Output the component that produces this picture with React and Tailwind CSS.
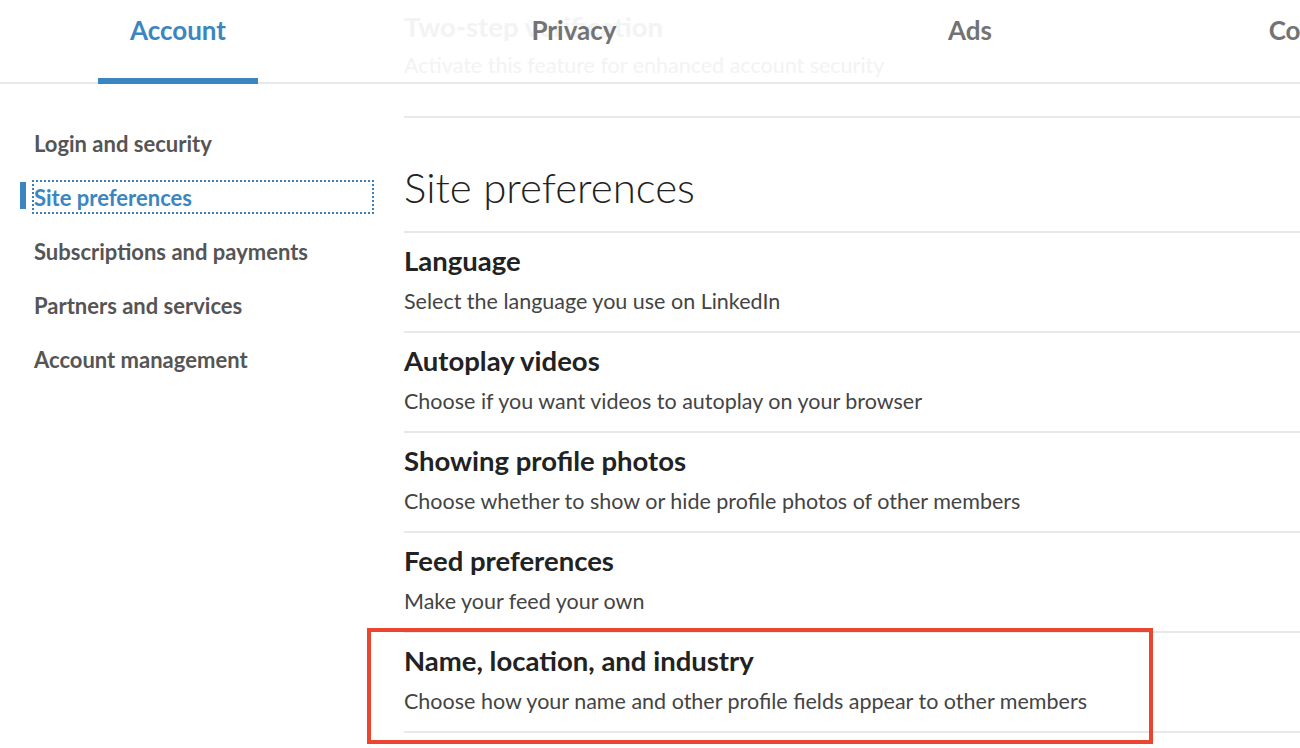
import React from 'react'

const tabs = ['Account', 'Privacy', 'Ads', 'Communications']

const navItems = [
  'Login and security',
  'Site preferences',
  'Subscriptions and payments',
  'Partners and services',
  'Account management',
]

const settings = [
  { title: 'Language', desc: 'Select the language you use on LinkedIn' },
  { title: 'Autoplay videos', desc: 'Choose if you want videos to autoplay on your browser' },
  { title: 'Showing profile photos', desc: 'Choose whether to show or hide profile photos of other members' },
  { title: 'Feed preferences', desc: 'Make your feed your own' },
  { title: 'Name, location, and industry', desc: 'Choose how your name and other profile fields appear to other members' },
]

export default function App() {
  return (
    <div className="relative w-[1300px] h-[748px] overflow-hidden bg-white font-['Lato',sans-serif]">
      {/* Tabs header, content scrolled behind it shows through */}
      <div className="relative h-[84px] border-b-2 border-[#e6e9ec]">
        <div className="absolute left-[404px] top-[8px] text-[#f2f3f4] whitespace-nowrap">
          <p className="text-[27.5px] font-bold leading-[38px]">Two-step verification</p>
          <p className="text-[21.5px] leading-[28px] mt-[5px]">Activate this feature for enhanced account security</p>
        </div>
        <div className="relative flex h-full pl-[98px] gap-[236px]">
          {tabs.map((t, i) => (
            <div
              key={t}
              className={
                'w-[160px] shrink-0 flex justify-center pt-[11px] text-[26px] font-bold leading-[38px] whitespace-nowrap ' +
                (i === 0 ? 'text-[#3b86c0] border-b-[6px] border-[#3b86c0] -mb-[2px]' : 'text-[#737373]')
              }
            >
              {t}
            </div>
          ))}
        </div>
      </div>

      <div className="flex">
        {/* Sidebar */}
        <div className="w-[404px] shrink-0 pt-[32px] pl-[20px]">
          {navItems.map((n, i) => (
            <div key={n} className="relative h-[54px] flex items-center">
              {i === 1 && <span className="absolute left-0 top-[12px] w-[6px] h-[27px] bg-[#3b86c0]" />}
              <div
                className={
                  'ml-[12px] w-[342px] h-[34px] flex items-center border-2 border-dotted text-[22px] font-bold whitespace-nowrap ' +
                  (i === 1 ? 'border-[#3b7fb9] text-[#3b86c0]' : 'border-transparent text-[#555555]')
                }
              >
                {n}
              </div>
            </div>
          ))}
        </div>

        {/* Main */}
        <div className="flex-1 mt-[32px]">
          <div className="border-t-2 border-[#e6e9ec]">
            <h1 className="pt-[45px] pb-[19px] text-[42px] font-light leading-[49px] text-[#222222] border-b-2 border-[#e6e9ec]">
              Site preferences
            </h1>
            {settings.map(s => (
              <div key={s.title} className="pt-[12px] pb-[16px] border-b-2 border-[#e6e9ec]">
                <p className="text-[27.5px] font-bold leading-[32px] text-[#222222]">{s.title}</p>
                <p className="mt-[11px] text-[21.5px] leading-[27px] text-[#444444]">{s.desc}</p>
              </div>
            ))}
          </div>
        </div>
      </div>

      {/* Highlight annotation */}
      <div className="absolute left-[367px] top-[628px] w-[786px] h-[116px] border-4 border-[#e9452f]" />
    </div>
  )
}
